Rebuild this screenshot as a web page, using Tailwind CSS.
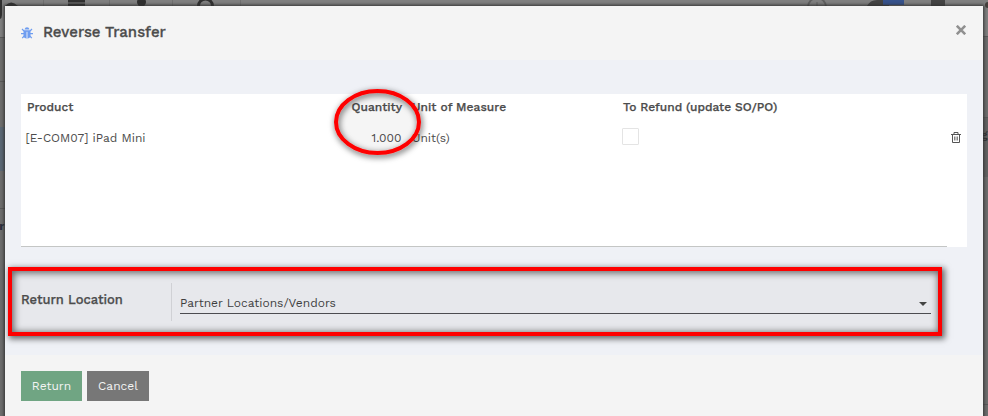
<!DOCTYPE html>
<html lang="en">
<head>
<meta charset="utf-8">
<title>Reverse Transfer</title>
<script src="https://cdn.jsdelivr.net/npm/@tailwindcss/browser@4"></script>
</head>
<body class="relative h-[416px] w-[988px] overflow-hidden bg-[#6d6d6d] font-['Work_Sans','Inter',sans-serif] text-[12px] text-[#4c4c4c]">
<!-- dimmed page behind the dialog -->
<svg class="absolute inset-0" width="988" height="416" viewBox="0 0 988 416" aria-hidden="true">
  <rect width="988" height="37" fill="#7f7f7f"/>
  <path d="M43.500 0V6M109.500 0V6M172.500 0V6M240.500 0V6" stroke="#707070"/>
  <path d="M0 0H2V15Q2 18 0 19ZM5 6Q11-1 18 6Z" fill="#303030"/>
  <path d="M68 1H85M68 5H85" stroke="#303030" stroke-width="3"/>
  <circle cx="141.500" cy="2" r="4.500" fill="#303030"/>
  <circle cx="205.500" cy="6" r="7" fill="none" stroke="#303030" stroke-width="3"/>
  <circle cx="817" cy="7" r="9" fill="none" stroke="#606060" stroke-width="2"/><path d="M817 2V7" stroke="#606060"/>
  <path d="M867 6Q870 0 877 0H889V6Z" fill="#444"/><path d="M883 0H904V5H883Z" fill="#36528c"/>
  <path d="M931 0H945V6H931Z" fill="#444"/><circle cx="988" cy="5" r="3" fill="#443f3c"/>
  <path d="M0 37.500H5M0 81.500H5M0 208.500H5M983 36.500H988M983 117.500H988M983 151.500H988M983 176.500H988M983 404.500H988" stroke="#595959"/>
  <rect y="127" width="5" height="44" fill="#5b6875"/>
  <rect x="983" y="118" width="5" height="59" fill="#626262"/>
</svg>
<span class="absolute left-[-8px] top-[217px] font-bold text-[#292f3c]">or</span>
<span class="absolute left-[981px] top-[126px] font-semibold text-[#333]">g,</span>

<section class="relative ml-[5px] mt-0 w-[978px] pt-[6px]">
 <div class="h-[420px] bg-[#f4f4f4] shadow-[0_0_3px_1px_#303030]">
  <header class="flex h-[54px] items-center pl-4 pr-[17px]">
    <svg class="mr-[10px] mt-[-1px] h-[12px] w-[12px]" viewBox="0 0 12 12" fill="#6f9df0" stroke="#6f9df0"><path d="M3.500 2.500Q4 .2 6 .2T8.500 2.500Z" stroke="none"/><path d="M2.500 3.300H9.500V8Q9.500 11.500 6 11.500T2.500 8Z" stroke="none"/><path d="M1 2 3 4M11 2 9 4M0 6.700H12M1.200 11.200 3.200 9M10.800 11.200 8.800 9" fill="none" stroke-width="1.200"/><path d="M6 4.800V11.500" stroke="#e4ebf6"/></svg>
    <h1 class="mt-[-3px] text-[15px] font-medium leading-5 whitespace-nowrap [-webkit-text-stroke:0.3px_#4c4c4c]">Reverse Transfer</h1>
    <svg class="ml-auto mt-[-7px] h-[10px] w-[10px]" viewBox="0 0 10 10" stroke="#909090" stroke-width="2.600"><path d="M.8.8 9.200 9.200M9.200.8.8 9.200"/></svg>
  </header>
  <div class="h-[295px] bg-[#eff1f6] px-4 pt-[34px]">
    <div class="h-[153px] bg-white">
      <div class="mr-5 h-[153px] border-b border-[#c4c6c5]">
        <div class="grid h-[26px] grid-cols-[314px_67px_10px_210px_1fr] items-center whitespace-nowrap font-medium [-webkit-text-stroke:0.25px_#4c4c4c]">
          <span class="pl-[6px]">Product</span><span class="text-right">Quantity</span><span></span><span class="tracking-[0.06px]">Unit of Measure</span><span class="pl-px">To Refund (update SO/PO)</span>
        </div>
        <div class="relative grid h-[36px] grid-cols-[314px_67px_10px_210px_1fr] items-center whitespace-nowrap">
          <span class="pl-[4.500px]">[E-COM07] iPad Mini</span><span class="pr-[0.500px] text-right">1.000</span><span></span><span>Unit(s)</span>
          <span class="mt-[-3px] h-[17px] w-[17px] rounded-[1px] border border-[#e4e4e4]"></span>
          <svg class="absolute right-[-14px] top-[12px] h-[11px] w-[10px]" viewBox="0 0 10 11" fill="none" stroke="#555"><path d="M0 2.500H10M3 2V.5H7V2M1.500 2.500V10.500H8.500V2.500"/><path d="M3.500 4.500V8.500M5 4.500V8.500M6.500 4.500V8.500" stroke="#777" stroke-width=".9"/></svg>
        </div>
      </div>
    </div>
    <!-- highlighted field -->
    <div class="-ml-[13px] mt-5 flex h-[69px] w-[934px] border-4 border-[#fe0000] bg-[#e7e8ec] pl-[9px] pt-[12px] shadow-[2px_2px_6px_1px_#00000090,inset_1px_1px_7px_1px_#00000090]">
      <label class="h-[38px] w-[151px] border-r border-[#d0d1d5] pt-[7px] text-[13px] font-medium leading-5 whitespace-nowrap [-webkit-text-stroke:0.25px_#4c4c4c]">Return Location</label>
      <div class="ml-[8px] flex h-[31px] w-[751px] items-center border-b border-[#4c4c50] pt-[9px] text-[#3f3f3f]"><span class="whitespace-nowrap">Partner Locations/Vendors</span>
        <svg class="ml-auto mr-[4px] mt-[3px] h-[4px] w-[8px]" viewBox="0 0 8 4" fill="#444"><path d="M0 0H8L4 4Z"/></svg>
      </div>
    </div>
  </div>
  <footer class="flex gap-[5px] pl-4 pt-[16px] text-[#f4f4f4]">
    <button class="h-[30px] w-[61px] bg-[#70a583]">Return</button><button class="h-[30px] w-[62px] bg-[#777]">Cancel</button>
  </footer>
 </div>
</section>
<!-- quantity callout -->
<svg class="absolute left-[324px] top-[79px] overflow-visible" width="108" height="88" viewBox="324 79 108 88" fill="none">
  <defs><filter id="s" x="-20%" y="-20%" width="140%" height="140%"><feDropShadow dx="1" dy="2" stdDeviation="3" flood-color="#000" flood-opacity=".7"/></filter></defs>
  <ellipse cx="377.500" cy="122" rx="41.500" ry="31" fill="#000" fill-opacity=".04"/>
  <ellipse cx="377.500" cy="122" rx="41.500" ry="31" stroke="#fe0000" stroke-width="4" filter="url(#s)"/>
</svg>
</body>
</html>
